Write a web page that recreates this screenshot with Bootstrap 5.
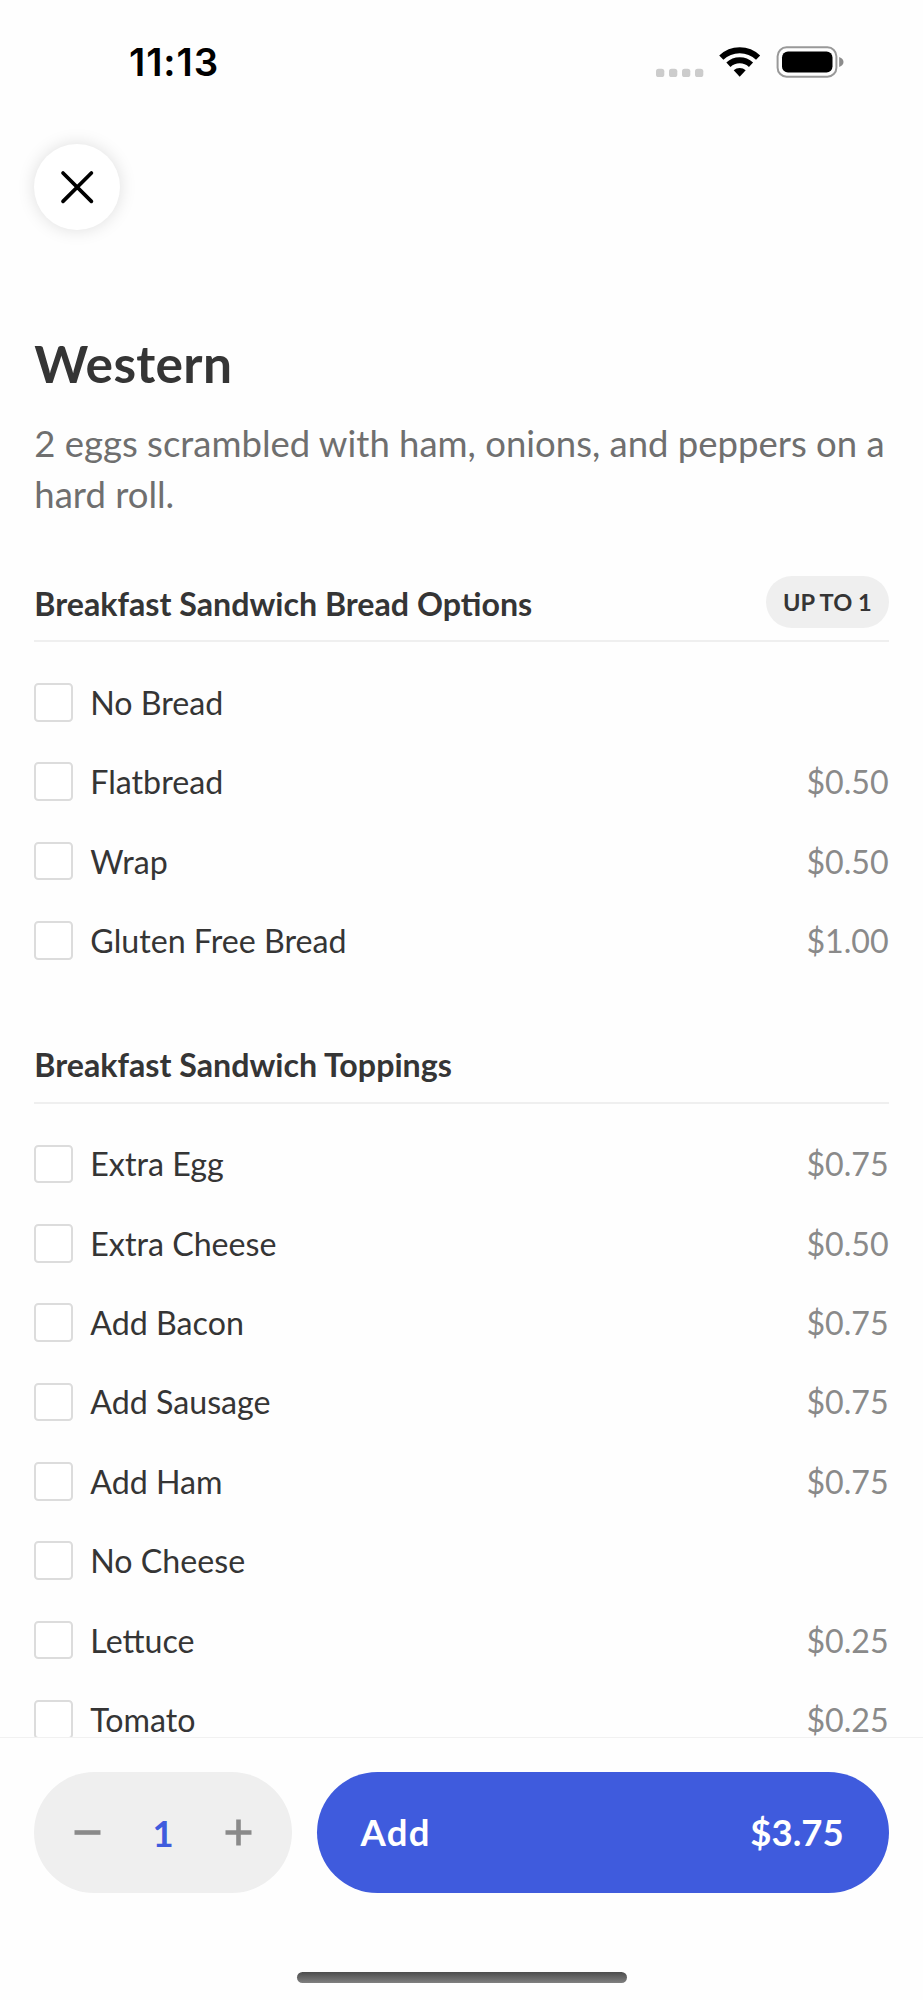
<!DOCTYPE html>
<html lang="en">
<head>
<meta charset="utf-8">
<meta name="viewport" content="width=device-width, initial-scale=1">
<title>Western</title>
<link href="https://cdn.jsdelivr.net/npm/bootstrap@5.3.0/dist/css/bootstrap.min.css" rel="stylesheet">
<style>
  body { font-family: Lato, "Liberation Sans", sans-serif; color: #353535; background: #fefefe; line-height: 1.2; }
  .screen { height: 2000px; overflow: hidden; }
  .gutter { padding-left: 34.3px; padding-right: 34.3px; }
  .status-bar { height: 114px; padding: 40px 79px 0 129px; }
  .content { padding-top: 30px; }
  .clock { font: 600 38.5px/45px Inter, "Liberation Sans", sans-serif; color: #000; letter-spacing: .9px; }
  .close-btn { width: 85.9px; height: 85.9px; background: #fff; box-shadow: 0 0 17px rgba(0,0,0,.13); }
  .item-title { font-size: 51.5px; line-height: 62px; margin: 102.2px 0 23.8px; letter-spacing: .3px; }
  .item-text { font-size: 36.5px; line-height: 51.5px; color: #6f6f6f; margin: 0; }
  .group-head { height: 77px; padding-bottom: 12.5px; border-bottom: 2.1px solid #efefef; margin-bottom: 20.5px; }
  .group-head h2 { font-size: 32.2px; line-height: 39px; margin: 0 0 5px; }
  .group-one { margin-top: 44.3px; }
  .group-two { margin-top: 46.4px; }
  .limit { width: 122.7px; height: 51.4px; font-size: 23.6px; background: #efefef; }
  .option { height: 79.4px; font-size: 32.2px; }
  .option span { padding-top: 1.6px; }
  .option:last-child span { line-height: 32px; }
  .form-check-input.box { width: 38.6px; height: 38.6px; margin: 0 17.4px 0 0; border: 2px solid #dcdcdc; border-radius: 4.3px; background: #fff; }
  .price { color: #8a8a8a; }
  .action-bar { height: 262.7px; border-top: 1px solid #f1f1f1; background: #fefefe; padding-top: 34px; }
  .action-row { gap: 25.6px; }
  .stepper { width: 257.6px; height: 120.2px; background: #efefef; padding: 0 40px; }
  .qty { font-size: 36.5px; color: #3f5bdd; padding-top: 2px; }
  .add-btn { height: 120.2px; background: #3f5bdd; color: #fff; font-size: 36.5px; padding: 0 45px 0 43px; }
  .add-label { letter-spacing: 1.3px; }
  .home-pill { width: 330px; height: 10.7px; margin-top: 79.5px; background: linear-gradient(#4c4c4c, #808080); }
</style>
</head>
<body>
<div class="screen d-flex flex-column">
  <header class="status-bar d-flex justify-content-between align-items-start flex-shrink-0">
    <span class="clock">11:13</span>
    <svg width="190" height="40" viewBox="0 0 190 40">
      <g fill="#ccc"><rect x="2" y="28.7" width="8.3" height="8.3" rx="2.6"/><rect x="15" y="28.7" width="8.3" height="8.3" rx="2.6"/><rect x="28" y="28.7" width="8.3" height="8.3" rx="2.6"/><rect x="41" y="28.7" width="8.3" height="8.3" rx="2.6"/></g>
      <g fill="none" stroke="#000" stroke-width="6">
        <path d="M67.3 17.6a26.5 26.5 0 0 1 36.8 0"/>
        <path d="M74.4 24.8a16.5 16.5 0 0 1 22.6 0"/>
      </g>
      <path d="M79.7 30.2a9.3 9.3 0 0 1 12 0l-6 6.6z"/>
      <rect x="123.6" y="7.3" width="58.8" height="29.4" rx="9" fill="none" stroke="#999" stroke-width="2"/>
      <rect x="128" y="11.5" width="50.5" height="21" rx="6"/>
      <path d="M185.2 17v10c2.8-1 4.3-2.8 4.3-5s-1.500-4-4.300-5z" fill="#8c8c8c"/>
    </svg>
  </header>

  <main class="content gutter flex-grow-1 overflow-hidden">
    <button class="close-btn btn border-0 rounded-circle p-0 d-flex align-items-center justify-content-center" aria-label="Close">
      <svg width="36" height="36" viewBox="0 0 36 36" stroke="#000" stroke-width="3.7" stroke-linecap="round"><path d="M4 4l28.400 28.400M32.400 4L4 32.400"/></svg>
    </button>
    <h1 class="item-title fw-bold">Western</h1>
    <p class="item-text">2 eggs scrambled with ham, onions, and peppers on a hard roll.</p>

    <section class="group-one">
      <div class="group-head d-flex align-items-end justify-content-between">
        <h2 class="fw-bold">Breakfast Sandwich Bread Options</h2>
        <span class="limit rounded-pill fw-bold d-flex align-items-center justify-content-center">UP TO 1</span>
      </div>
      <label class="option d-flex align-items-center"><input type="checkbox" class="form-check-input box"><span>No Bread</span></label>
      <label class="option d-flex align-items-center"><input type="checkbox" class="form-check-input box"><span>Flatbread</span><span class="price ms-auto">$0.50</span></label>
      <label class="option d-flex align-items-center"><input type="checkbox" class="form-check-input box"><span>Wrap</span><span class="price ms-auto">$0.50</span></label>
      <label class="option d-flex align-items-center"><input type="checkbox" class="form-check-input box"><span>Gluten Free Bread</span><span class="price ms-auto">$1.00</span></label>
    </section>

    <section class="group-two">
      <div class="group-head d-flex align-items-end">
        <h2 class="fw-bold">Breakfast Sandwich Toppings</h2>
      </div>
      <label class="option d-flex align-items-center"><input type="checkbox" class="form-check-input box"><span>Extra Egg</span><span class="price ms-auto">$0.75</span></label>
      <label class="option d-flex align-items-center"><input type="checkbox" class="form-check-input box"><span>Extra Cheese</span><span class="price ms-auto">$0.50</span></label>
      <label class="option d-flex align-items-center"><input type="checkbox" class="form-check-input box"><span>Add Bacon</span><span class="price ms-auto">$0.75</span></label>
      <label class="option d-flex align-items-center"><input type="checkbox" class="form-check-input box"><span>Add Sausage</span><span class="price ms-auto">$0.75</span></label>
      <label class="option d-flex align-items-center"><input type="checkbox" class="form-check-input box"><span>Add Ham</span><span class="price ms-auto">$0.75</span></label>
      <label class="option d-flex align-items-center"><input type="checkbox" class="form-check-input box"><span>No Cheese</span></label>
      <label class="option d-flex align-items-center"><input type="checkbox" class="form-check-input box"><span>Lettuce</span><span class="price ms-auto">$0.25</span></label>
      <label class="option d-flex align-items-center"><input type="checkbox" class="form-check-input box"><span>Tomato</span><span class="price ms-auto">$0.25</span></label>
    </section>
  </main>

  <footer class="action-bar gutter flex-shrink-0">
    <div class="action-row d-flex">
      <div class="stepper rounded-pill d-flex align-items-center justify-content-between flex-shrink-0">
        <svg width="27" height="27" viewBox="0 0 27 27" stroke="#8a8a8a" stroke-width="4.600"><path d="M.5 13.500h26"/></svg>
        <span class="qty fw-bold">1</span>
        <svg width="27" height="27" viewBox="0 0 27 27" stroke="#8a8a8a" stroke-width="4.600"><path d="M.5 13.500h26M13.500 .5v26"/></svg>
      </div>
      <button class="add-btn btn border-0 rounded-pill fw-bold flex-grow-1 d-flex align-items-center justify-content-between"><span class="add-label">Add</span><span>$3.75</span></button>
    </div>
    <div class="home-pill rounded-pill mx-auto"></div>
  </footer>
</div>
<script src="https://cdn.jsdelivr.net/npm/bootstrap@5.3.0/dist/js/bootstrap.bundle.min.js"></script>
</body>
</html>
